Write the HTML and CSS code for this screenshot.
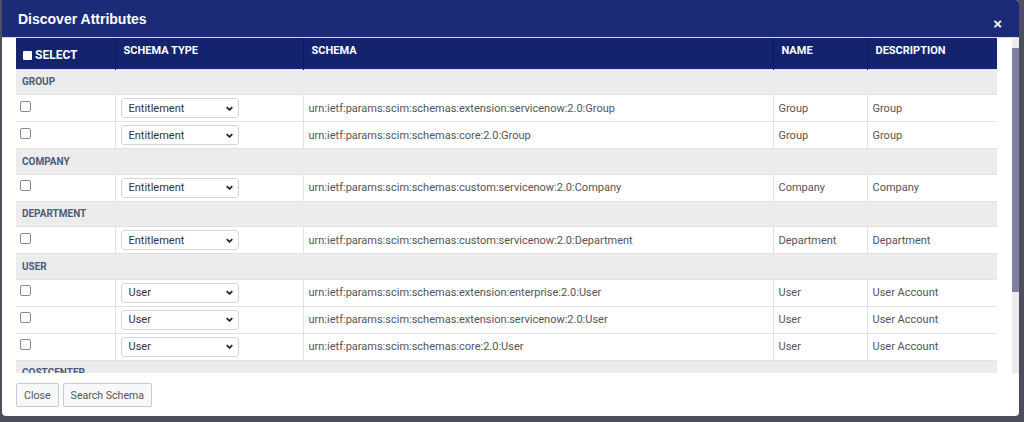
FILE: index.html
```html
<!DOCTYPE html>
<html lang="en">
<head>
  <meta charset="UTF-8">
  <title>Discover Attributes</title>
  <link rel="stylesheet" href="styles.css">
</head>
<body>
  <!-- Modal -->
  <div class="modal">
    <div class="modal-header">
      <h4>Discover Attributes</h4>
      <button class="close">&times;</button>
    </div>

    <div class="modal-body">
      <div class="table-wrap">
        <table class="attr-table">
          <thead>
            <tr>
              <th class="col-select"><span class="head-check"></span>SELECT</th>
              <th class="col-type">SCHEMA TYPE</th>
              <th class="col-schema">SCHEMA</th>
              <th class="col-name">NAME</th>
              <th class="col-desc">DESCRIPTION</th>
            </tr>
          </thead>
          <tbody>
            <tr class="group-row"><td colspan="5">GROUP</td></tr>
            <tr>
              <td><input type="checkbox" class="check"></td>
              <td><div class="select-box">Entitlement<svg viewBox="0 0 10 6"><path d="M1 1l4 4 4-4"/></svg></div></td>
              <td>urn:ietf:params:scim:schemas:extension:servicenow:2.0:Group</td>
              <td>Group</td>
              <td>Group</td>
            </tr>
            <tr>
              <td><input type="checkbox" class="check"></td>
              <td><div class="select-box">Entitlement<svg viewBox="0 0 10 6"><path d="M1 1l4 4 4-4"/></svg></div></td>
              <td>urn:ietf:params:scim:schemas:core:2.0:Group</td>
              <td>Group</td>
              <td>Group</td>
            </tr>
            <tr class="group-row"><td colspan="5">COMPANY</td></tr>
            <tr>
              <td><input type="checkbox" class="check"></td>
              <td><div class="select-box">Entitlement<svg viewBox="0 0 10 6"><path d="M1 1l4 4 4-4"/></svg></div></td>
              <td>urn:ietf:params:scim:schemas:custom:servicenow:2.0:Company</td>
              <td>Company</td>
              <td>Company</td>
            </tr>
            <tr class="group-row"><td colspan="5">DEPARTMENT</td></tr>
            <tr>
              <td><input type="checkbox" class="check"></td>
              <td><div class="select-box">Entitlement<svg viewBox="0 0 10 6"><path d="M1 1l4 4 4-4"/></svg></div></td>
              <td>urn:ietf:params:scim:schemas:custom:servicenow:2.0:Department</td>
              <td>Department</td>
              <td>Department</td>
            </tr>
            <tr class="group-row"><td colspan="5">USER</td></tr>
            <tr>
              <td><input type="checkbox" class="check"></td>
              <td><div class="select-box">User<svg viewBox="0 0 10 6"><path d="M1 1l4 4 4-4"/></svg></div></td>
              <td>urn:ietf:params:scim:schemas:extension:enterprise:2.0:User</td>
              <td>User</td>
              <td>User Account</td>
            </tr>
            <tr>
              <td><input type="checkbox" class="check"></td>
              <td><div class="select-box">User<svg viewBox="0 0 10 6"><path d="M1 1l4 4 4-4"/></svg></div></td>
              <td>urn:ietf:params:scim:schemas:extension:servicenow:2.0:User</td>
              <td>User</td>
              <td>User Account</td>
            </tr>
            <tr>
              <td><input type="checkbox" class="check"></td>
              <td><div class="select-box">User<svg viewBox="0 0 10 6"><path d="M1 1l4 4 4-4"/></svg></div></td>
              <td>urn:ietf:params:scim:schemas:core:2.0:User</td>
              <td>User</td>
              <td>User Account</td>
            </tr>
            <tr class="group-row"><td colspan="5">COSTCENTER</td></tr>
          </tbody>
        </table>
      </div>
      <div class="scrollbar"><div class="thumb"></div></div>
    </div>

    <div class="modal-footer">
      <button class="btn">Close</button>
      <button class="btn">Search Schema</button>
    </div>
  </div>
</body>
</html>
```

FILE: styles.css
```css
/* General */
body {
  margin: 0;
  padding: 0;
  background: #4c4f5b;
  font-family: 'Roboto', 'Liberation Sans', sans-serif;
  height: 422px;
  overflow: hidden;
}

/* Modal */
.modal {
  margin: 0 5px 0 2px;
  height: 416px;
  background: #fff;
  border-radius: 0 4px 4px 4px;
  overflow: hidden;
  display: flex;
  flex-direction: column;
}

.modal-header {
  height: 37px;
  flex: none;
  background: #1b2b78;
  border-bottom: 1px solid #d6dae8;
  display: flex;
  align-items: center;
  justify-content: space-between;
  padding: 0 17px 0 16px;
}

.modal-header h4 {
  margin: 1px 0 0 0;
  color: #fff;
  font-family: 'Liberation Sans', Arial, sans-serif;
  font-size: 14px;
  font-weight: bold;
}

.close {
  background: none;
  border: none;
  color: #fff;
  font-family: 'Liberation Sans', Arial, sans-serif;
  font-size: 15px;
  font-weight: bold;
  padding: 0;
  margin-top: 9px;
  line-height: 1;
}

/* Body */
.modal-body {
  height: 335px;
  flex: none;
  display: flex;
  padding-left: 14px;
  overflow: hidden;
}

.table-wrap {
  width: 981px;
  overflow: hidden;
}

.scrollbar {
  width: 7px;
  margin-left: 15px;
  background: #ececec;
  padding-top: 10px;
}

.scrollbar .thumb {
  height: 244px;
  background: #7b80a2;
}

/* Table */
.attr-table {
  width: 981px;
  border-collapse: collapse;
  table-layout: fixed;
  font-size: 11px;
  color: #555;
}

.attr-table th {
  height: 31px;
  box-sizing: border-box;
  background: #13236d;
  color: #fff;
  font-family: 'Roboto', 'Liberation Sans', sans-serif;
  font-size: 11px;
  font-weight: bold;
  text-align: left;
  vertical-align: top;
  padding: 6px 7px 0 8px;
  border-right: 1px solid #0b1a58;
}

.attr-table th:last-child {
  border-right: none;
}

.col-select { width: 99px; }
.col-type { width: 188px; }
.col-schema { width: 470px; }
.col-name { width: 94px; }
.col-desc { width: 130px; }

.attr-table th.col-select {
  padding: 10px 0 0 7px;
  font-size: 12px;
}

.head-check {
  display: inline-block;
  width: 9px;
  height: 9px;
  background: #fff;
  border-radius: 1px;
  margin-right: 3px;
  vertical-align: -1px;
}

.attr-table td {
  height: 27px;
  box-sizing: border-box;
  padding: 0 5px;
  border: 1px solid #e2e2e2;
  vertical-align: middle;
  white-space: nowrap;
  overflow: hidden;
}

.attr-table td:first-child {
  border-left: none;
  padding-left: 4px;
}

.attr-table td:last-child {
  border-right: none;
}

.group-row td {
  height: 25.5px;
  background: #ececec;
  color: #4b5b7c;
  font-size: 10px;
  font-weight: bold;
  padding-left: 6px;
}

.attr-table .group-row td:first-child {
  padding-left: 6px;
}

.check {
  -webkit-appearance: none;
  appearance: none;
  width: 11px;
  height: 11px;
  margin: 0 0 4px 0;
  border: 1px solid #8a8a8a;
  border-radius: 2px;
  background: #fff;
  display: block;
}

.select-box {
  width: 118px;
  height: 20px;
  box-sizing: border-box;
  border: 1px solid #d6d6d6;
  border-radius: 3px;
  display: flex;
  align-items: center;
  justify-content: space-between;
  padding: 0 5px 0 7px;
  color: #333;
  font-size: 11px;
}

.select-box svg {
  width: 7px;
  height: 5px;
  fill: none;
  stroke: #222;
  stroke-width: 2.4;
}

/* Footer */
.modal-footer {
  flex: 1;
  padding: 10px 14px;
  display: flex;
  align-items: flex-start;
  gap: 4px;
}

.btn {
  height: 24px;
  padding: 0 7px;
  background: #f7f8fa;
  border: 1px solid #c3cadb;
  border-radius: 2px;
  color: #555;
  font-family: 'Roboto', sans-serif;
  font-size: 10.6px;
}
```
